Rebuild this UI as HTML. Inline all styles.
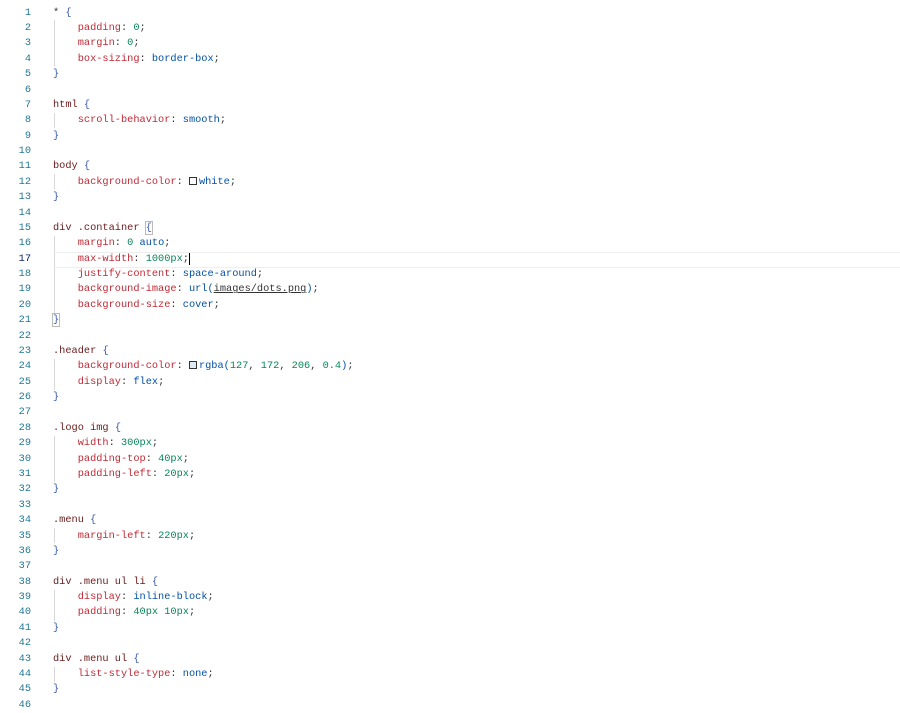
<!DOCTYPE html>
<html><head><style>
body{margin:0;background:#fff;width:900px;height:708px;overflow:hidden;position:relative;font-family:"Liberation Mono",monospace;font-size:10.3px}
.l{position:absolute;left:0;height:15.38px;line-height:15.38px;white-space:pre;width:900px}
.n{position:absolute;right:869px;color:#237893;text-align:right}
.c{position:absolute;left:53px}
.s{color:#6b1a1a}.p{color:#c02a35}.v{color:#0451a5}.u{color:#098658}.b{color:#3b5bab}.t{color:#333}
.g{position:absolute;left:54px;width:1px;background:#d8d8d8}
.sw{display:inline-block;width:8px;height:8px;border:1px solid #333;box-sizing:border-box;margin-right:2px;vertical-align:-1px}
</style></head><body>
<div class="l" style="top:-10px;color:#bbb"><span class="c">...................................................................</span></div>
<div class="g" style="top:20px;height:46px"></div>
<div class="g" style="top:113px;height:15px"></div>
<div class="g" style="top:174px;height:15px"></div>
<div class="g" style="top:236px;height:77px"></div>
<div class="g" style="top:359px;height:31px"></div>
<div class="g" style="top:436px;height:46px"></div>
<div class="g" style="top:528px;height:15px"></div>
<div class="g" style="top:590px;height:31px"></div>
<div class="g" style="top:667px;height:15px"></div>
<div style="position:absolute;left:53px;top:252px;width:847px;height:14px;border-top:1px solid #eee;border-bottom:1px solid #eee"></div>
<div id="x"></div>
<script>
var L=[
'<span class="t">* </span><span class="b">{</span>',
'    <span class="p">padding</span><span class="t">: </span><span class="u">0</span><span class="t">;</span>',
'    <span class="p">margin</span><span class="t">: </span><span class="u">0</span><span class="t">;</span>',
'    <span class="p">box-sizing</span><span class="t">: </span><span class="v">border-box</span><span class="t">;</span>',
'<span class="b">}</span>','',
'<span class="s">html</span> <span class="b">{</span>',
'    <span class="p">scroll-behavior</span><span class="t">: </span><span class="v">smooth</span><span class="t">;</span>',
'<span class="b">}</span>','',
'<span class="s">body</span> <span class="b">{</span>',
'    <span class="p">background-color</span><span class="t">: </span><span class="sw"></span><span class="v">white</span><span class="t">;</span>',
'<span class="b">}</span>','',
'<span class="s">div .container</span> <span class="b" style="outline:1px solid #bbb">{</span>',
'    <span class="p">margin</span><span class="t">: </span><span class="u">0</span> <span class="v">auto</span><span class="t">;</span>',
'    <span class="p">max-width</span><span class="t">: </span><span class="u">1000px</span><span class="t" style="border-right:1px solid #000">;</span>',
'    <span class="p">justify-content</span><span class="t">: </span><span class="v">space-around</span><span class="t">;</span>',
'    <span class="p">background-image</span><span class="t">: </span><span class="v">url(</span><span class="t" style="text-decoration:underline">images/dots.png</span><span class="v">)</span><span class="t">;</span>',
'    <span class="p">background-size</span><span class="t">: </span><span class="v">cover</span><span class="t">;</span>',
'<span class="b" style="outline:1px solid #bbb">}</span>','',
'<span class="s">.header</span> <span class="b">{</span>',
'    <span class="p">background-color</span><span class="t">: </span><span class="sw" style="background:#dfe9f1"></span><span class="v">rgba(</span><span class="u">127</span><span class="t">, </span><span class="u">172</span><span class="t">, </span><span class="u">206</span><span class="t">, </span><span class="u">0.4</span><span class="v">)</span><span class="t">;</span>',
'    <span class="p">display</span><span class="t">: </span><span class="v">flex</span><span class="t">;</span>',
'<span class="b">}</span>','',
'<span class="s">.logo img</span> <span class="b">{</span>',
'    <span class="p">width</span><span class="t">: </span><span class="u">300px</span><span class="t">;</span>',
'    <span class="p">padding-top</span><span class="t">: </span><span class="u">40px</span><span class="t">;</span>',
'    <span class="p">padding-left</span><span class="t">: </span><span class="u">20px</span><span class="t">;</span>',
'<span class="b">}</span>','',
'<span class="s">.menu</span> <span class="b">{</span>',
'    <span class="p">margin-left</span><span class="t">: </span><span class="u">220px</span><span class="t">;</span>',
'<span class="b">}</span>','',
'<span class="s">div .menu ul li</span> <span class="b">{</span>',
'    <span class="p">display</span><span class="t">: </span><span class="v">inline-block</span><span class="t">;</span>',
'    <span class="p">padding</span><span class="t">: </span><span class="u">40px 10px</span><span class="t">;</span>',
'<span class="b">}</span>','',
'<span class="s">div .menu ul</span> <span class="b">{</span>',
'    <span class="p">list-style-type</span><span class="t">: </span><span class="v">none</span><span class="t">;</span>',
'<span class="b">}</span>',''];
var h='';
for(var i=0;i<L.length;i++){h+='<div class="l" style="top:'+(5.6+i*15.38).toFixed(2)+'px"><span class="n"'+(i==16?' style="color:#0b216f"':'')+'>'+(i+1)+'</span><span class="c">'+L[i]+'</span></div>';}
document.getElementById('x').innerHTML=h;
</script>
</body></html>
